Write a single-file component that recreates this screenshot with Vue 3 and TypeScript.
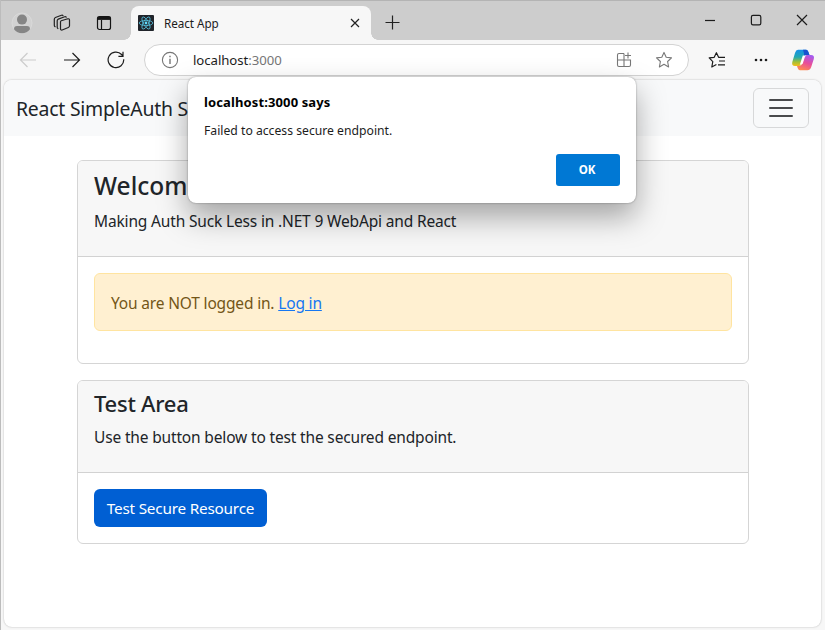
<script setup lang="ts">
import { ref } from 'vue'

interface Tab {
  title: string
}

const tab: Tab = { title: 'React App' }
const dialogOpen = ref(true)

function testResource(): void {
  dialogOpen.value = true
}
</script>

<template>
  <div class="window">
    <header class="titlebar">
      <div class="tools">
        <svg class="avatar" width="22" height="22" viewBox="0 0 22 22">
          <circle cx="11" cy="11" r="10" fill="#d2d2d2" stroke="#dadada" />
          <circle cx="11" cy="7.6" r="5" fill="#858585" />
          <path d="M3 17.2Q3 14 6 14H16Q19 14 19 17.2Q16 21.3 11 21.3Q6 21.3 3 17.2Z" fill="#858585" />
        </svg>
        <svg class="spaces" width="18" height="18" viewBox="0 0 18 18" fill="none" stroke="#222" stroke-width="1.2" stroke-linejoin="round" stroke-linecap="round">
          <path d="M8.2 6.8L14.8 4.8Q16.5 4.5 16.5 6V11.8Q16.5 13 15.3 13.5L9.2 16Q7.5 16.4 7.5 14.7V8Q7.5 7.1 8.2 6.8Z" />
          <path d="M4.9 14.5Q4.2 14.1 4.2 13.2V6.8Q4.2 5.6 5.3 5.1L11.7 2.8Q12.7 2.5 13.2 3.2" />
          <path d="M2.1 12.7Q1.3 12.3 1.3 11.2V5.2Q1.3 4 2.4 3.5L8.5 1.3Q9.5 1 10 1.6" />
        </svg>
        <svg class="vertical" width="16" height="16" viewBox="0 0 16 16" fill="none" stroke="#151515" stroke-width="1.2">
          <rect x="1.5" y="1.5" width="13" height="13" rx="2" />
          <path d="M1.5 3.3H14.5" stroke-width="3.2" />
          <path d="M5.5 5V14.5" />
        </svg>
      </div>
      <div class="tab">
        <svg class="favicon" width="16" height="16" viewBox="0 0 16 16">
          <rect width="16" height="16" rx="1" fill="#20242a" />
          <g fill="none" stroke="#55bfdc" stroke-width=".8">
            <ellipse cx="8" cy="8" rx="6.8" ry="2.6" />
            <ellipse cx="8" cy="8" rx="6.8" ry="2.6" transform="rotate(60 8 8)" />
            <ellipse cx="8" cy="8" rx="6.8" ry="2.6" transform="rotate(120 8 8)" />
          </g>
          <circle cx="8" cy="8" r="1.4" fill="#61dafb" />
        </svg>
        <span class="tab-title">{{ tab.title }}</span>
        <svg class="tab-close" width="10" height="10" viewBox="0 0 10 10" stroke="#222" stroke-width="1.2">
          <path d="M1 1L9 9M9 1L1 9" />
        </svg>
      </div>
      <svg class="new-tab" width="15" height="15" viewBox="0 0 15 15" stroke="#222" stroke-width="1.2">
        <path d="M7.5 .5V14.5M.5 7.5H14.5" />
      </svg>
      <div class="window-buttons">
        <svg width="12" height="12" viewBox="0 0 12 12" stroke="#1c1c1c" stroke-width="1.2"><path d="M1 6.5H11" /></svg>
        <svg width="12" height="12" viewBox="0 0 12 12" fill="none" stroke="#1c1c1c" stroke-width="1.2"><rect x="1.4" y="1.4" width="9.4" height="9.4" rx="1.6" /></svg>
        <svg width="12" height="12" viewBox="0 0 12 12" stroke="#1c1c1c" stroke-width="1.2"><path d="M1 1L11 11M11 1L1 11" /></svg>
      </div>
    </header>

    <nav class="toolbar">
      <div class="nav-buttons">
        <svg width="18" height="16" viewBox="0 0 18 16" fill="none" stroke="#cccccc" stroke-width="1.2"><path d="M17 8H1.5M8.5 1L1.5 8L8.5 15" /></svg>
        <svg width="18" height="16" viewBox="0 0 18 16" fill="none" stroke="#1c1c1c" stroke-width="1.2"><path d="M1 8H16.5M9.5 1L16.5 8L9.5 15" /></svg>
        <svg width="18" height="18" viewBox="0 0 18 18" fill="none" stroke="#1c1c1c" stroke-width="1.2"><path d="M16.7 8.2A7.8 7.8 0 1 1 14.6 3.5L16 5M16 .8V5.4H11.4" /></svg>
      </div>
      <div class="address">
        <svg width="18" height="18" viewBox="0 0 18 18" fill="none" stroke="#767676" stroke-width="1.1">
          <circle cx="9" cy="9" r="7.6" />
          <path d="M9 7.8V13M9 4.8V6.3" stroke-width="1.4" />
        </svg>
        <span class="url">localhost<span class="port">:3000</span></span>
        <svg class="app-icon" width="16" height="16" viewBox="0 0 16 16" fill="none" stroke="#777" stroke-width="1.1">
          <path d="M8 1.5H3Q1.5 1.5 1.5 3V13Q1.5 14.5 3 14.5H13Q14.5 14.5 14.5 13V8H1.5M8 1.5V14.5M12 .5V6.5M9 3.5H15" />
        </svg>
        <svg width="18" height="18" viewBox="0 0 18 18" fill="none" stroke="#777" stroke-width="1.1" stroke-linejoin="round">
          <path d="M9 1.4L11.2 6.2L16.5 6.9L12.6 10.5L13.6 15.9L9 13.3L4.4 15.9L5.4 10.5L1.5 6.9L6.8 6.2Z" />
        </svg>
      </div>
      <div class="actions">
        <svg width="18" height="18" viewBox="0 0 18 18" fill="none" stroke="#1c1c1c" stroke-width="1.2" stroke-linejoin="round">
          <path d="M11.3 6.3H10.6L8.4 1.7L6.2 6.3L1.2 6.9L4.8 10.6L3.8 16L8.4 13.5M10.8 6.3H17M11 10H17M10 13.8H17" />
        </svg>
        <svg width="16" height="4" viewBox="0 0 16 4" fill="#1c1c1c"><circle cx="3" cy="2" r="1.3" /><circle cx="8" cy="2" r="1.3" /><circle cx="13" cy="2" r="1.3" /></svg>
        <svg width="24" height="22" viewBox="0 0 24 22">
          <defs>
            <linearGradient id="cool" x1="0" y1="0" x2="0" y2="1"><stop offset="0" stop-color="#168fe8" /><stop offset=".45" stop-color="#22a9b1" /><stop offset=".75" stop-color="#a4bf35" /><stop offset="1" stop-color="#f5bd18" /></linearGradient>
            <linearGradient id="warm" x1=".7" y1="0" x2=".3" y2="1"><stop offset="0" stop-color="#a45cf0" /><stop offset=".5" stop-color="#e84d9a" /><stop offset="1" stop-color="#ff8a50" /></linearGradient>
          </defs>
          <path d="M7 .8H15Q17 .8 18 5L18.5 6H16Q14 6 13.3 8L11 15Q10.3 17 8 17H4Q.4 17 1.3 13L4 4Q5 .8 7 .8Z" fill="url(#cool)" />
          <path d="M12 .8H15Q17 .8 18 5L18.5 6H16Q14 6 13.3 8Q13 3 12 .8Z" fill="#1752cf" />
          <path d="M16 6H20Q23.8 6 22.8 10L20.2 18Q19 21.2 16.5 21.2H9Q7 21.2 6 17H8Q10.3 17 11 15L13.3 8Q14 6 16 6Z" fill="url(#warm)" />
          <path d="M11.8 6.6H15.2Q14 7.4 13.7 8.6L11.8 14.4Q11 15.8 8.8 15.8Z" fill="#fff" />
        </svg>
      </div>
    </nav>

    <main class="page">
      <div class="navbar">
        <span class="brand">React SimpleAuth S</span>
        <button class="toggler" aria-label="Toggle navigation">
          <svg width="30" height="30" viewBox="0 0 30 30" stroke="#494a4c" stroke-width="2" stroke-linecap="round"><path d="M4 7H26M4 15H26M4 23H26" /></svg>
        </button>
      </div>
      <div class="content">
        <section class="card">
          <div class="card-header welcome">
            <h3>Welcome</h3>
            <p class="intro">Making Auth Suck Less in .NET 9 WebApi and React</p>
          </div>
          <div class="card-body">
            <div class="alert">You are NOT logged in. <a>Log in</a></div>
          </div>
        </section>
        <section class="card">
          <div class="card-header test">
            <h4>Test Area</h4>
            <p>Use the button below to test the secured endpoint.</p>
          </div>
          <div class="card-body">
            <button class="primary" @click="testResource">Test Secure Resource</button>
          </div>
        </section>
      </div>
    </main>

    <div v-if="dialogOpen" class="dialog">
      <strong>localhost:3000 says</strong>
      <p>Failed to access secure endpoint.</p>
      <button class="ok" @click="dialogOpen = false">OK</button>
    </div>
  </div>
</template>

<style>
body {
  margin: 0;
  overflow: hidden;
}
</style>

<style scoped>
* {
  box-sizing: border-box;
}
.window {
  position: relative;
  display: flex;
  flex-direction: column;
  width: 825px;
  height: 630px;
  overflow: hidden;
  background: #f7f7f7;
  border-left: 1px solid #bcbcbc;
  font-family: "Noto Sans", "Open Sans", sans-serif;
  color: #212529;
}
svg {
  display: block;
  flex: none;
}
button {
  font-family: inherit;
  padding: 0;
}
.titlebar {
  display: flex;
  height: 40px;
  flex: none;
  background: #cdcdcd;
  border-top: 1px solid #b4b4b4;
}
.tools {
  display: flex;
  align-items: center;
  width: 130px;
  padding: 5px 0 0 10px;
}
.spaces {
  margin-left: 20px;
}
.vertical {
  margin-left: 25px;
}
.tab {
  position: relative;
  display: flex;
  align-items: center;
  width: 240px;
  height: 34px;
  margin-top: 5px;
  padding: 0 11px 0 7px;
  background: #f7f7f7;
  border-radius: 8px 8px 0 0;
}
.tab::before,
.tab::after {
  content: "";
  position: absolute;
  bottom: 0;
  width: 7px;
  height: 7px;
}
.tab::before {
  left: -7px;
  background: radial-gradient(circle at 0 0, transparent 6.5px, #f7f7f7 7px);
}
.tab::after {
  right: -7px;
  background: radial-gradient(circle at 100% 0, transparent 6.5px, #f7f7f7 7px);
}
.tab-title {
  flex: 1;
  margin-left: 10px;
  font-size: 11.7px;
  line-height: 16px;
  letter-spacing: -0.05px;
  color: #1c1c1c;
}
.new-tab {
  margin: 14px 0 0 14px;
}
.window-buttons {
  display: flex;
  gap: 34px;
  margin: 13px 17px 0 auto;
}
.toolbar {
  display: flex;
  align-items: center;
  height: 40px;
  flex: none;
}
.nav-buttons {
  display: flex;
  align-items: center;
  gap: 26px;
  width: 143px;
  padding-left: 18px;
}
.address {
  display: flex;
  align-items: center;
  width: 545px;
  height: 32px;
  padding: 0 15px 0 16px;
  background: #fff;
  border: 1px solid #d3d3d3;
  border-radius: 16px;
}
.url {
  flex: 1;
  margin-left: 14px;
  font-size: 13.2px;
  letter-spacing: -0.05px;
  color: #1c1c1c;
}
.port {
  color: #767676;
}
.app-icon {
  margin-right: 23px;
}
.actions {
  display: flex;
  align-items: center;
  gap: 27px;
  margin-left: 19px;
}
.actions svg:last-child {
  margin-left: -5px;
}
.page {
  width: 817px;
  height: 547px;
  margin: 0 0 0 3px;
  overflow: hidden;
  background: #fff;
  border-radius: 8px;
  box-shadow: 0 0 2px rgba(0, 0, 0, 0.28);
}
.navbar {
  display: flex;
  align-items: center;
  justify-content: space-between;
  height: 56px;
  padding: 0 12px;
  background: #f8f9fa;
}
.brand {
  font-size: 19.4px;
  line-height: 28px;
  letter-spacing: -0.22px;
  padding-top: 2px;
}
.toggler {
  display: flex;
  align-items: center;
  justify-content: center;
  width: 56px;
  height: 40px;
  background: transparent;
  border: 1px solid #d7d8d9;
  border-radius: 6px;
}
.content {
  display: flex;
  flex-direction: column;
  gap: 16px;
  padding: 24px 72px 0 73px;
}
.card {
  border: 1px solid #d5d5d5;
  border-radius: 6px;
  background: #fff;
  overflow: hidden;
}
.card-header {
  padding: 8px 16px;
  background: #f7f7f7;
  border-bottom: 1px solid #d2d2d2;
}
.welcome {
  height: 96px;
}
.test {
  height: 92px;
}
h3,
h4,
p {
  margin: 0;
}
h3 {
  font-size: 24.5px;
  font-weight: 550;
  line-height: 34px;
}
h4 {
  font-size: 22px;
  font-weight: 550;
  line-height: 28px;
  letter-spacing: -0.25px;
}
.card-header p {
  font-size: 15.5px;
  line-height: 24px;
  letter-spacing: -0.16px;
}
.welcome p {
  margin-top: 6px;
}
.card-header.test p {
  margin-top: 8px;
}
.card-body {
  padding: 16px;
}
.welcome + .card-body {
  padding-bottom: 32px;
}
.alert {
  height: 58px;
  padding: 17px 16px 15px;
  background: #fff0d1;
  border: 1px solid #ffe4a0;
  border-radius: 6px;
  font-size: 15.5px;
  line-height: 24px;
  letter-spacing: -0.17px;
  color: #735617;
}
.alert a {
  color: #1677f2;
  text-decoration: underline;
}
.primary {
  display: block;
  width: 173px;
  height: 38px;
  background: #005fd3;
  border: 0;
  border-radius: 6px;
  color: #fff;
  font-size: 15.3px;
  letter-spacing: -0.2px;
}
.dialog {
  position: absolute;
  left: 187px;
  top: 77px;
  display: flex;
  flex-direction: column;
  width: 448px;
  height: 126px;
  padding: 15px 16px 16px;
  background: #fff;
  border-radius: 8px;
  box-shadow: 0 0 2px rgba(0, 0, 0, 0.4), 0 14px 30px rgba(0, 0, 0, 0.34);
  color: #1c1c1c;
}
.dialog strong {
  color: #000;
  font-size: 13px;
  line-height: 20px;
  letter-spacing: 0.12px;
}
.dialog p {
  margin-top: 9px;
  font-size: 12.2px;
  line-height: 20px;
}
.ok {
  align-self: flex-end;
  width: 64px;
  height: 32px;
  margin-top: 13px;
  padding: 0 2px 1px 0;
  background: #0078d4;
  border: 0;
  border-radius: 3px;
  color: #fff;
  font-size: 11.5px;
  font-weight: 700;
}
</style>
